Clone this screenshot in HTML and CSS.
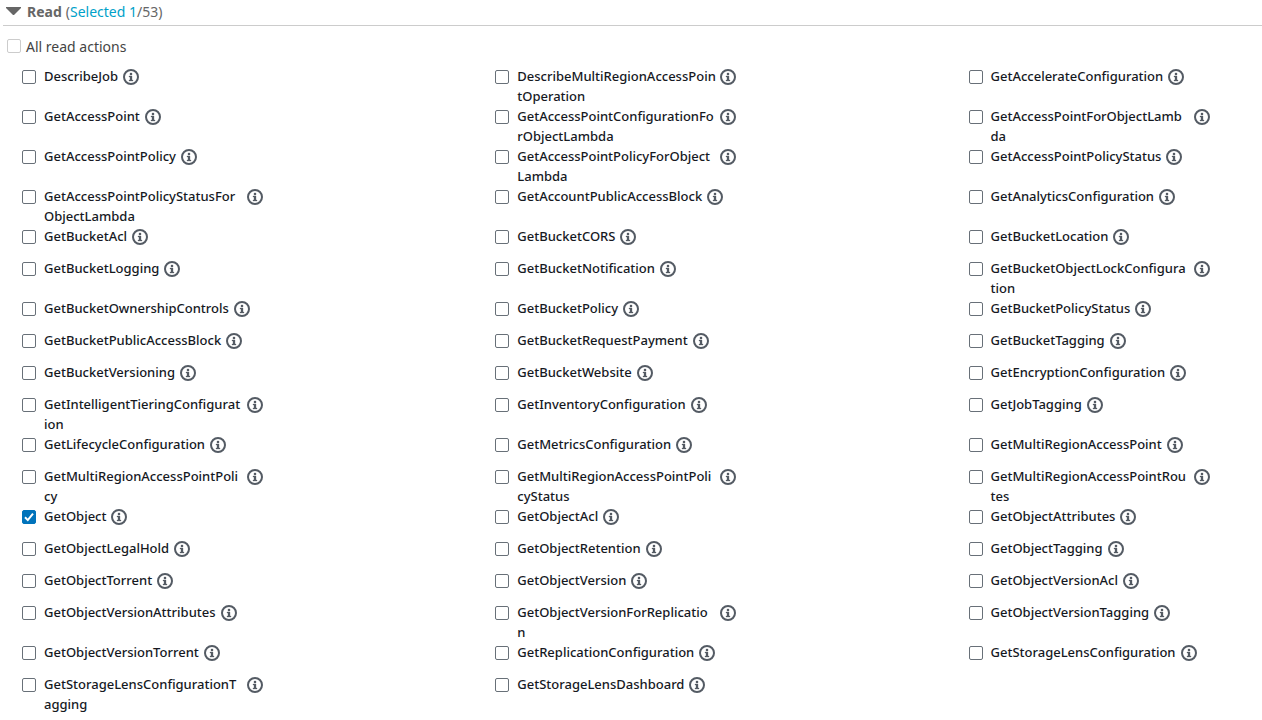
FILE: index.html
```
<!DOCTYPE html>
<html lang="en">
<head>
    <meta charset="UTF-8">
    <title>Read actions</title>
    <link rel="stylesheet" href="styles.css">
</head>
<body>
    <section class="accessLevel">
        <header class="levelHeader">
            <button type="button" class="toggleButton" aria-label="Collapse Read" aria-expanded="true">
                <svg width="16" height="10" viewBox="0 0 16 10"><path d="M0 0h15v1L8 8H7L0 1z" fill="#666"/></svg>
            </button>
            <h2>Read</h2>
            <span class="levelCount">(<a href="#actionGrid">Selected 1</a>/53)</span>
        </header>

        <label class="allActions" for="allRead">
            <input type="checkbox" id="allRead">
            <span>All read actions</span>
        </label>

        <div class="actionGrid" id="actionGrid"></div>
    </section>

    <script src="actions.js"></script>
</body>
</html>
```

FILE: styles.css
```
* {
    box-sizing: border-box;
}

body {
    font-family: "Noto Sans", sans-serif;
    font-size: 14px;
    line-height: 20px;
    color: #16191f;
    background-color: #fff;
    margin: 0;
    overflow: hidden;
}

.levelHeader {
    display: flex;
    align-items: center;
    height: 26px;
    margin-left: 3px;
    padding: 0 0 1px 3px;
    border-bottom: 1px solid #ccc;
    color: #666;
}

.toggleButton {
    display: flex;
    padding: 0;
    margin-right: 5px;
    border: none;
    background: none;
    cursor: pointer;
}

h2 {
    font-size: 14px;
    margin: 0 4px 0 0;
}

.levelCount a {
    color: #00a1c9;
    text-decoration: none;
}

.allActions {
    display: flex;
    margin: 11px 0 9px 7px;
    color: #444;
}

input[type="checkbox"] {
    appearance: none;
    flex: none;
    width: 14px;
    height: 14px;
    margin: 4px 0 0;
    border: 1px solid #687078;
    border-radius: 2px;
    background-color: #fff;
}

.allActions input[type="checkbox"] {
    margin: 2px 5px 0 0;
    border-color: #ccc;
}

input[type="checkbox"]:checked {
    border-color: #0073bb;
    background: #0073bb url("data:image/svg+xml,%3Csvg xmlns='http://www.w3.org/2000/svg' viewBox='0 0 12 12'%3E%3Cpath d='M2 6.3l2.8 2.8L10 2.6' fill='none' stroke='white' stroke-width='2'/%3E%3C/svg%3E") center / 12px 12px no-repeat;
}

.actionGrid {
    display: grid;
    grid-template-columns: 37.5vw 37.5vw 1fr;
    margin-left: 22px;
}

.action {
    display: flex;
    align-items: flex-start;
    min-height: 32px;
}

.action label {
    padding-left: 8px;
    font-size: 13px;
    font-weight: 500;
    white-space: nowrap;
}

.action .twoLines {
    width: 206px;
}

.infoButton {
    display: flex;
    flex: none;
    margin: 3px 0 0 5px;
    padding: 0;
    border: none;
    background: none;
    cursor: pointer;
}
```

FILE: actions.js
```
// "|" marks where a long name breaks onto its second line
const actions = [
    "DescribeJob", "DescribeMultiRegionAccessPoin|tOperation", "GetAccelerateConfiguration",
    "GetAccessPoint", "GetAccessPointConfigurationFo|rObjectLambda", "GetAccessPointForObjectLamb|da",
    "GetAccessPointPolicy", "GetAccessPointPolicyForObject|Lambda", "GetAccessPointPolicyStatus",
    "GetAccessPointPolicyStatusFor|ObjectLambda", "GetAccountPublicAccessBlock", "GetAnalyticsConfiguration",
    "GetBucketAcl", "GetBucketCORS", "GetBucketLocation",
    "GetBucketLogging", "GetBucketNotification", "GetBucketObjectLockConfigura|tion",
    "GetBucketOwnershipControls", "GetBucketPolicy", "GetBucketPolicyStatus",
    "GetBucketPublicAccessBlock", "GetBucketRequestPayment", "GetBucketTagging",
    "GetBucketVersioning", "GetBucketWebsite", "GetEncryptionConfiguration",
    "GetIntelligentTieringConfigurat|ion", "GetInventoryConfiguration", "GetJobTagging",
    "GetLifecycleConfiguration", "GetMetricsConfiguration", "GetMultiRegionAccessPoint",
    "GetMultiRegionAccessPointPoli|cy", "GetMultiRegionAccessPointPoli|cyStatus", "GetMultiRegionAccessPointRou|tes",
    "GetObject", "GetObjectAcl", "GetObjectAttributes",
    "GetObjectLegalHold", "GetObjectRetention", "GetObjectTagging",
    "GetObjectTorrent", "GetObjectVersion", "GetObjectVersionAcl",
    "GetObjectVersionAttributes", "GetObjectVersionForReplicatio|n", "GetObjectVersionTagging",
    "GetObjectVersionTorrent", "GetReplicationConfiguration", "GetStorageLensConfiguration",
    "GetStorageLensConfigurationT|agging", "GetStorageLensDashboard"
];
const selected = ["GetObject"];

const actionGrid = document.getElementById("actionGrid");

for (const entry of actions) {
    const name = entry.replace("|", "");
    const twoLines = entry.includes("|");
    const action = document.createElement("div");
    action.className = "action";
    action.innerHTML = `
        <input type="checkbox" id="${name}" ${selected.includes(name) ? "checked" : ""}>
        <label for="${name}" class="${twoLines ? "twoLines" : "oneLine"}">${entry.replace("|", "<br>")}</label>
        <button type="button" class="infoButton" aria-label="About ${name}">
            <svg width="16" height="16" viewBox="0 0 16 16">
                <circle cx="8" cy="8" r="7" fill="none" stroke="#545b64" stroke-width="2"/>
                <path d="M7 4h2v2H7zM6 7h3v4h1v1H6v-1h1V8H6z" fill="#545b64" stroke="#545b64" stroke-width=".3"/>
            </svg>
        </button>
    `;
    actionGrid.appendChild(action);
}
```
